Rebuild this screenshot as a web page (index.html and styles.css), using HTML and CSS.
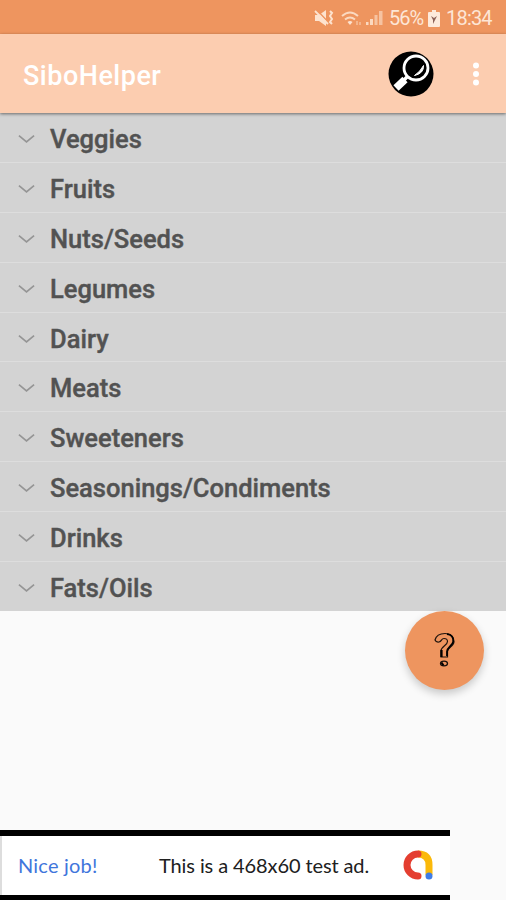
FILE: index.html
```
<!DOCTYPE html>
<html lang="en">
<head>
  <meta charset="UTF-8" />
  <meta name="viewport" content="width=device-width, initial-scale=1.0"/>
  <title>SiboHelper</title>
  <link rel="stylesheet" href="styles.css">
</head>
<body>
  <div class="status-bar">
    <svg class="status-icons" width="72" height="20" viewBox="0 0 72 20">
      <!-- muted sound -->
      <path d="M1 7h4l7-5v16l-7-5H1z" fill="#fde3cf"/>
      <path d="M2 1l13 14" stroke="#ee955f" stroke-width="1.500"/>
      <path d="M1 3l13 13" stroke="#fde3cf" stroke-width="1.800"/>
      <path d="M16 3l2 2-2 3 2 3-2 3 2 2" fill="none" stroke="#fde3cf" stroke-width="2"/>
      <!-- wifi -->
      <path d="M28 8q8-7 16 0M31 11.500q5-4 10 0" fill="none" stroke="#fbd9c0" stroke-width="2"/>
      <path d="M33.500 14q2.500-2 5 0L36 17z" fill="#fde3cf"/>
      <path d="M43 13v4M46 14v3" stroke="#f5bd98" stroke-width="1.600"/>
      <!-- signal -->
      <path d="M52 14h2.500v3H52zM56 11h3v6h-3z" fill="#fbd9c0"/>
      <path d="M60.500 7h3v10h-3zM65 3h3.500v14H65z" fill="#f6c3a1"/>
    </svg>
    <span class="battery-level">56%</span>
    <svg class="battery" width="12" height="17" viewBox="0 0 12 17">
      <path d="M4 0h4v2h3q1 0 1 1v13q0 1-1 1H1q-1 0-1-1V3q0-1 1-1h3z" fill="#fdeadb"/>
      <path d="M3 6l3 2 3-2-2 4-2 4V10z" fill="#8c6258"/>
    </svg>
    <span class="clock">18:34</span>
  </div>

  <header class="toolbar">
    <h1 class="title">SiboHelper</h1>
    <svg class="search" width="46" height="46" viewBox="0 0 46 46">
      <circle cx="23" cy="23" r="22.500" fill="#000"/>
      <circle cx="28" cy="17" r="12" fill="none" stroke="#fff" stroke-width="2.800"/>
      <path d="M35.500 14.500q.5 8-9 10 5.500-3.500 9-10z" fill="#fff" stroke="#fff" stroke-width="1"/>
      <path d="M20 25l-4 4" stroke="#fff" stroke-width="3.500"/>
      <path d="M17 28.500l-9 8.500" stroke="#fff" stroke-width="7.500"/>
    </svg>
    <svg class="more" width="8" height="24" viewBox="0 0 8 24">
      <circle cx="4" cy="3.500" r="3" fill="#fff"/>
      <circle cx="4" cy="12" r="3" fill="#fff"/>
      <circle cx="4" cy="20.500" r="3" fill="#fff"/>
    </svg>
  </header>

  <ul class="groups">
    <li class="group"><svg class="chevron" viewBox="0 0 18 10"><path d="M1 1.500l8 6.500 8-6.500"/></svg><span class="name">Veggies</span></li>
    <li class="group"><svg class="chevron" viewBox="0 0 18 10"><path d="M1 1.500l8 6.500 8-6.500"/></svg><span class="name">Fruits</span></li>
    <li class="group"><svg class="chevron" viewBox="0 0 18 10"><path d="M1 1.500l8 6.500 8-6.500"/></svg><span class="name">Nuts/Seeds</span></li>
    <li class="group"><svg class="chevron" viewBox="0 0 18 10"><path d="M1 1.500l8 6.500 8-6.500"/></svg><span class="name">Legumes</span></li>
    <li class="group"><svg class="chevron" viewBox="0 0 18 10"><path d="M1 1.500l8 6.500 8-6.500"/></svg><span class="name">Dairy</span></li>
    <li class="group"><svg class="chevron" viewBox="0 0 18 10"><path d="M1 1.500l8 6.500 8-6.500"/></svg><span class="name">Meats</span></li>
    <li class="group"><svg class="chevron" viewBox="0 0 18 10"><path d="M1 1.500l8 6.500 8-6.500"/></svg><span class="name">Sweeteners</span></li>
    <li class="group"><svg class="chevron" viewBox="0 0 18 10"><path d="M1 1.500l8 6.500 8-6.500"/></svg><span class="name">Seasonings/Condiments</span></li>
    <li class="group"><svg class="chevron" viewBox="0 0 18 10"><path d="M1 1.500l8 6.500 8-6.500"/></svg><span class="name">Drinks</span></li>
    <li class="group"><svg class="chevron" viewBox="0 0 18 10"><path d="M1 1.500l8 6.500 8-6.500"/></svg><span class="name">Fats/Oils</span></li>
  </ul>

  <button class="help" aria-label="Help">
    <svg width="24" height="36" viewBox="0 0 24 36">
      <!-- hollow question mark, heavier on the right side -->
      <path d="M2 8C3 4 7 1.500 12 1.500c5 0 9 3.500 9 8 0 5-6.500 6-6.500 10V25H8v-6c0-5 6.500-5.500 6.500-9.500 0-2-1.500-3-3.500-3-3 0-2 3-5 3.500Q3 10.500 2 8z" fill="none" stroke="#1c120c" stroke-width="1.200"/>
      <path d="M14 2.200c5 .3 6.500 3.500 6.200 7.300-.5 4-6 5.500-6.200 10V24" fill="none" stroke="#000" stroke-width="1.800"/>
      <path d="M8.500 25v-7" stroke="#000" stroke-width="2.200"/>
      <ellipse cx="11" cy="31.500" rx="3.500" ry="2.300" fill="none" stroke="#1c120c" stroke-width="1.300"/>
      <path d="M8.500 30.500l2 3" stroke="#000" stroke-width="2"/>
    </svg>
  </button>

  <footer class="ad">
    <div class="ad-body">
      <span class="ad-praise">Nice job!</span>
      <span class="ad-text">This is a 468x60 test ad.</span>
      <svg class="ad-logo" width="30" height="30" viewBox="0 0 30 30">
        <path d="M15 4q11 0 11 11v10" fill="none" stroke="#fbb90a" stroke-width="7"/>
        <path d="M15 4a11 11 0 0 0 0 22" fill="none" stroke="#e43e30" stroke-width="7" stroke-linecap="round"/>
        <circle cx="26" cy="26" r="3.500" fill="#3f7de8"/>
      </svg>
    </div>
  </footer>
</body>
</html>
```
FILE: styles.css
```
* {
  box-sizing: border-box;
}
body {
  margin: 0;
  height: 900px;
  display: flex;
  flex-direction: column;
  overflow: hidden;
  background: #fafafa;
  font-family: Roboto, sans-serif;
}
.status-bar {
  height: 34px;
  display: flex;
  align-items: center;
  justify-content: flex-end;
  padding: 2px 14px 0 0;
  background: #ee955f;
  color: #fde6d6;
  font-size: 20px;
}
.status-icons {
  margin-right: 3px;
}
.battery-level {
  width: 35px;
  letter-spacing: -1px;
}
.battery {
  margin: 0 6px 0 4px;
}
.clock {
  width: 46px;
  letter-spacing: -0.8px;
}
.toolbar {
  height: 79px;
  display: flex;
  align-items: center;
  padding: 0 26px 0 23px;
  background: #fccdb0;
  position: relative;
  box-shadow: 0 1px 3px rgba(0,0,0,0.5);
}
.title {
  flex: 1;
  margin: 4px 0 0;
  color: #fff;
  font-size: 27px;
  font-weight: 500;
  letter-spacing: 0.5px;
}
.search {
  margin-right: 38px;
}
.groups {
  margin: 0;
  padding: 0;
  list-style: none;
  background: #d3d3d3;
}
.group {
  height: 49.9px;
  display: flex;
  align-items: center;
  gap: 15px;
  padding: 3px 0 0 18px;
  border-bottom: 1px solid #dddddd;
}
.group:last-child {
  height: 48.5px;
  border-bottom: 0;
}
.chevron {
  width: 17px;
  height: 10px;
  fill: none;
  stroke: #959595;
  stroke-width: 1.8;
}
.name {
  color: #525252;
  font-size: 25.5px;
  font-weight: 500;
  -webkit-text-stroke: 0.4px #525252;
}
.help {
  width: 79px;
  height: 79px;
  flex: none;
  align-self: flex-end;
  display: flex;
  align-items: center;
  justify-content: center;
  margin: 0 22px 0 0;
  padding: 0;
  border: 0;
  border-radius: 50%;
  background: #ee955f;
  box-shadow: 0 4px 8px rgba(0,0,0,0.2);
}
.ad {
  width: 450px;
  height: 70px;
  margin-top: auto;
  padding: 6px 0 5px;
  background: #000;
}
.ad-body {
  height: 59px;
  display: flex;
  align-items: center;
  padding: 0 17px 2px 16px;
  background: #fff;
  border-left: 2px solid #ddd;
  font-family: Lato, sans-serif;
  font-size: 20px;
}
.ad-praise {
  width: 141px;
  color: #3f76dc;
  letter-spacing: 0.2px;
}
.ad-text {
  flex: 1;
  color: #202020;
  white-space: nowrap;
  letter-spacing: -0.1px;
}
```
